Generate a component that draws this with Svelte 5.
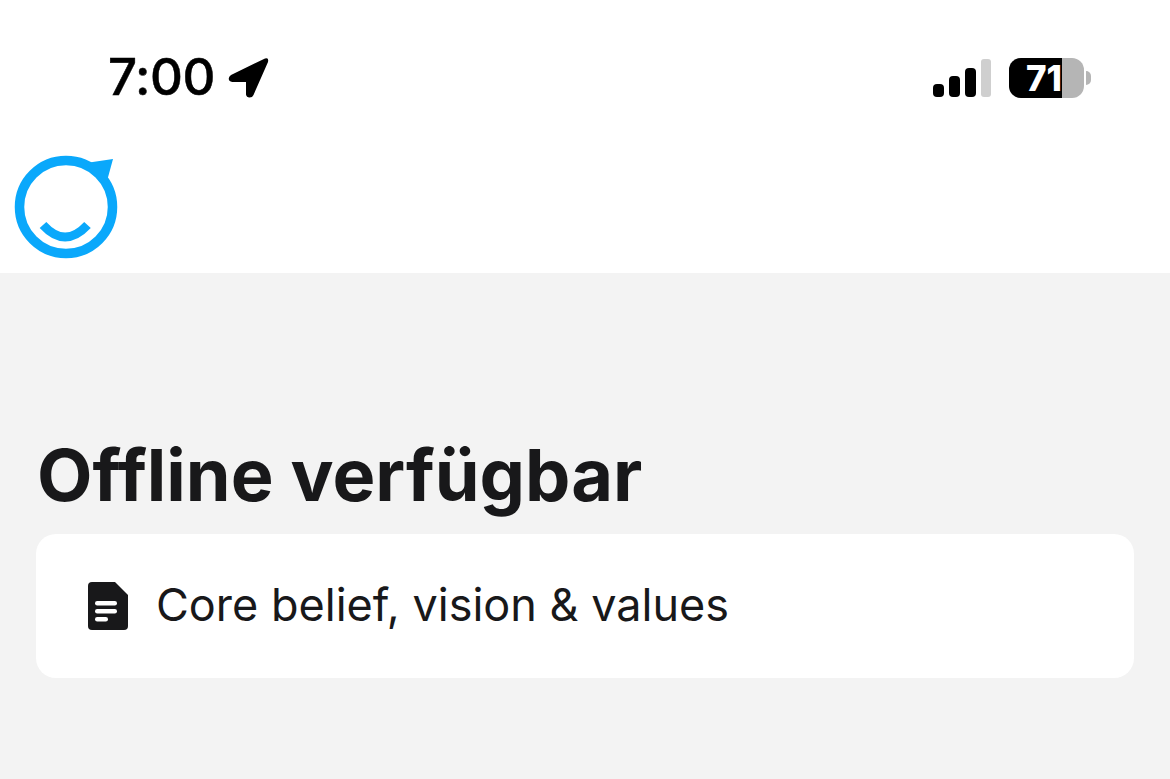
<script>
  let title = "Offline verfügbar";
  let docs = ["Core belief, vision & values"];
</script>

<div class="page">
  <header class="top">
    <div class="status">
      <div class="time">
        <span>7:00</span>
        <svg width="42" height="42" viewBox="0 0 42 42" class="arrow">
          <path d="M37 2.500 L3 19 Q0 21 1 24 Q2 26 6 26 L18 26 L18 38.500 Q18.500 41.500 21.500 41.500 Q24.500 41.500 25.500 39 L40 6 Q41 1 37 2.500 Z" fill="#000" />
        </svg>
      </div>
      <div class="right">
        <svg width="58" height="38" viewBox="0 0 58 38">
          <rect x="0" y="25" width="11" height="13" rx="4" fill="#000" />
          <rect x="16" y="17" width="11" height="21" rx="4" fill="#000" />
          <rect x="32" y="9" width="11" height="29" rx="4" fill="#000" />
          <rect x="48" y="0" width="10" height="38" rx="3" fill="#cfcfcf" />
        </svg>
        <div class="battery">
          <div class="bat-body">
            <div class="bat-level"></div>
            <span>71</span>
          </div>
          <div class="bat-tip"></div>
        </div>
      </div>
    </div>
    <div class="logo-row">
      <svg width="104" height="108" viewBox="0 0 104 108">
        <circle cx="52" cy="55" r="46.500" fill="none" stroke="#0aa8fb" stroke-width="9.500" />
        <path d="M72 11 L99 7 L93 29 L88 31.500 L78 21 Z" fill="#0aa8fb" />
        <path d="M29 73 Q51 97 73.500 73" fill="none" stroke="#0aa8fb" stroke-width="9" />
      </svg>
    </div>
  </header>

  <main class="content">
    <h1>{title}</h1>
    <ul class="card">
      {#each docs as doc}
        <li class="row">
          <svg width="42" height="50" viewBox="0 0 42 50" class="doc">
            <path d="M5 1 H28 L41 14 V45 Q41 49 37 49 H5 Q1 49 1 45 V5 Q1 1 5 1 Z" fill="#18181a" />
            <rect x="8" y="20" width="22" height="4.500" rx="2.200" fill="#fff" />
            <rect x="8" y="28" width="22" height="4.500" rx="2.200" fill="#fff" />
            <rect x="8" y="36" width="13" height="4.500" rx="2.200" fill="#fff" />
          </svg>
          <span class="name">{doc}</span>
        </li>
      {/each}
    </ul>
  </main>
</div>

<style>
  :global(body) {
    margin: 0;
    background: #f3f3f3;
    font-family: Inter, "Liberation Sans", sans-serif;
  }
  .page {
    width: 1170px;
    height: 779px;
    overflow: hidden;
    display: flex;
    flex-direction: column;
    background: #f3f3f3;
  }
  .top {
    background: #fff;
    height: 273px;
    box-sizing: border-box;
    display: flex;
    flex-direction: column;
  }
  .status {
    height: 152px;
    flex-shrink: 0;
    display: flex;
    justify-content: space-between;
    align-items: flex-start;
    padding: 48px 79px 0 108px;
    box-sizing: border-box;
  }
  .time {
    display: flex;
    align-items: center;
    gap: 13px;
    font-size: 51px;
    font-weight: 500;
    letter-spacing: -0.4px;
    line-height: 58px;
    color: #000;
    -webkit-text-stroke: 0.5px #000;
  }
  .right {
    display: flex;
    align-items: center;
    gap: 18px;
    padding-top: 10px;
  }
  .battery {
    display: flex;
    align-items: center;
    gap: 2px;
  }
  .bat-body {
    position: relative;
    width: 75px;
    height: 40px;
    border-radius: 12px;
    background: #b5b5b5;
    overflow: hidden;
    display: flex;
    align-items: center;
    justify-content: center;
    color: #fff;
    font-size: 35px;
    font-weight: 800;
  }
  .bat-level {
    position: absolute;
    left: 0;
    top: 0;
    bottom: 0;
    width: 53px;
    background: #000;
  }
  .bat-body span {
    position: relative;
    margin-right: 5px;
  }
  .bat-tip {
    width: 5px;
    height: 14px;
    background: #b5b5b5;
    border-radius: 0 7px 7px 0;
  }
  .logo-row {
    padding-left: 14px;
    line-height: 0;
  }
  .content {
    padding: 0 36px;
  }
  h1 {
    margin: 161px 0 19px 1px;
    font-size: 72px;
    line-height: 81px;
    font-weight: 700;
    color: #18181a;
  }
  .card {
    list-style: none;
    margin: 0;
    padding: 0;
    background: #fff;
    border-radius: 20px;
  }
  .row {
    height: 144px;
    display: flex;
    align-items: center;
    gap: 27px;
    padding-left: 51px;
    font-size: 45px;
    color: #18181a;
  }
  .name {
    margin-top: -3px;
  }
</style>
